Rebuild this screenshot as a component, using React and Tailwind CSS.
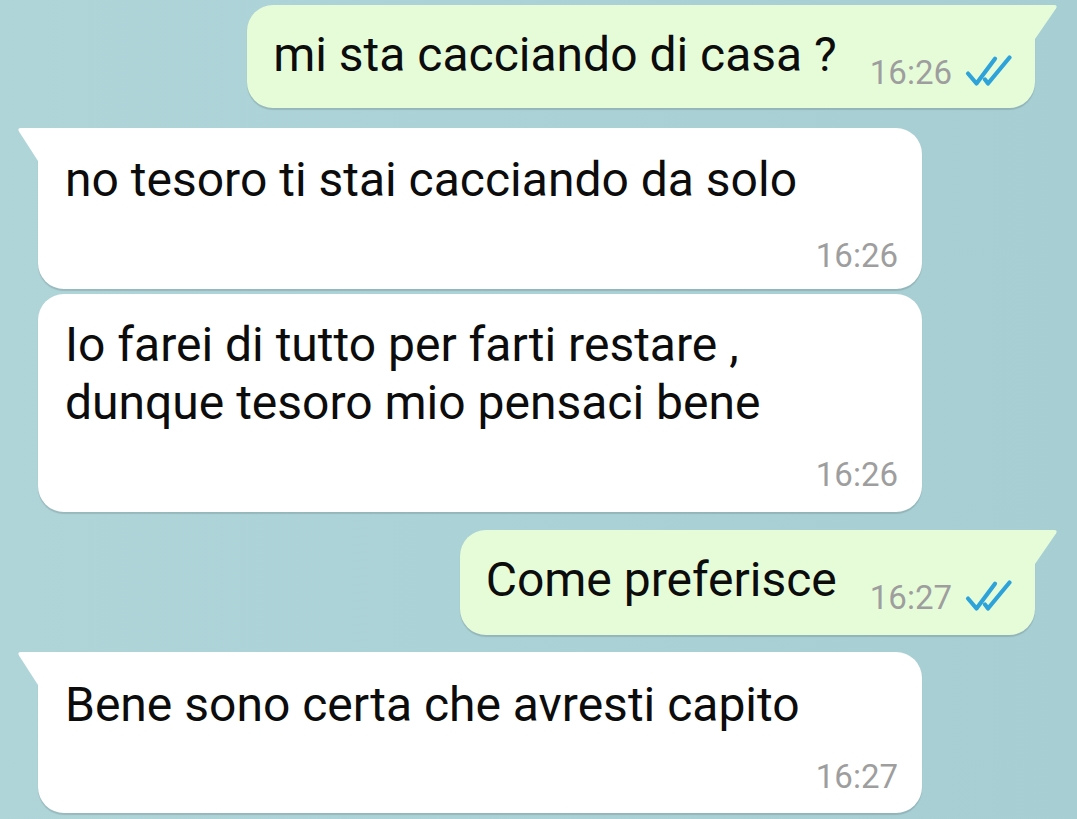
import React from "react";

// read ticks, drawn in the same 48x32 box as WhatsApp's double check
function Ticks() {
  return (
    <svg width="48" height="32" viewBox="0 0 48 32" fill="none" stroke="#2ea3da" strokeWidth="4.2" strokeLinecap="round" strokeLinejoin="round" aria-hidden="true">
      <path d="M4 18.5L12.5 28.5L31 3.7" />
      <path d="M21 24.5L24 28.5L45.5 2.5" />
    </svg>
  );
}

function OutTail() {
  return (
    <svg className="absolute left-full top-0" width="23" height="34" viewBox="0 0 23 34" aria-hidden="true">
      <path d="M0 0H19Q23 0 21 3.5L0 34Z" fill="#e6fcd9" />
    </svg>
  );
}

function InTail() {
  return (
    <svg className="absolute right-full top-0" width="21" height="33" viewBox="0 0 21 33" aria-hidden="true">
      <path d="M21 0H4Q0 0 2 3.5L21 33Z" fill="#ffffff" />
    </svg>
  );
}

function Outgoing({ text, time, className }) {
  return (
    <div className={"relative self-end mr-[42px] bg-[#e6fcd9] rounded-[26px] rounded-tr-none shadow-[0_1.5px_1px_rgba(0,0,0,0.13)] flex items-start pl-[26px] pr-[23px] pt-[21px] " + className}>
      <OutTail />
      <span className="text-[48px] leading-[58px] text-[#0c0c0c]">{text}</span>
      <span className="ml-[33px] mt-[27px] text-[33px] leading-[40px] text-[#9e9e9e]">{time}</span>
      <span className="ml-[12px] mt-[29px]">
        <Ticks />
      </span>
    </div>
  );
}

function Incoming({ lines, time, tail, className, timeGap }) {
  return (
    <div className={"relative ml-[38px] w-[884px] bg-white rounded-[26px] shadow-[0_1.5px_1px_rgba(0,0,0,0.13)] flex flex-col pl-[27px] pr-[24px] " + (tail ? "rounded-tl-none " : "") + className}>
      {tail && <InTail />}
      {lines.map((l) => (
        <span key={l} className="text-[48px] leading-[58px] text-[#0c0c0c]">{l}</span>
      ))}
      <span className={"self-end text-[33px] leading-[40px] text-[#9e9e9e] " + timeGap}>{time}</span>
    </div>
  );
}

export default function App() {
  return (
    <div className="w-[1077px] h-[819px] overflow-hidden bg-[linear-gradient(90deg,#afd5d9,#a6ced3)] pt-[5px] flex flex-col font-['Roboto','Liberation_Sans',sans-serif]">
      <Outgoing text="mi sta cacciando di casa ?" time="16:26" className="h-[103px]" />
      <Incoming
        tail
        lines={["no tesoro ti stai cacciando da solo"]}
        time="16:26"
        className="mt-[20px] h-[161px] pt-[23px]"
        timeGap="mt-[27px]"
      />
      <Incoming
        lines={["Io farei di tutto per farti restare ,", "dunque tesoro mio pensaci bene"]}
        time="16:26"
        className="mt-[5px] h-[218px] pt-[22px]"
        timeGap="mt-[23px]"
      />
      <Outgoing text="Come preferisce" time="16:27" className="mt-[18px] h-[105px]" />
      <Incoming
        tail
        lines={["Bene sono certa che avresti capito"]}
        time="16:27"
        className="mt-[17px] h-[161px] pt-[24px]"
        timeGap="mt-[23px]"
      />
    </div>
  );
}
